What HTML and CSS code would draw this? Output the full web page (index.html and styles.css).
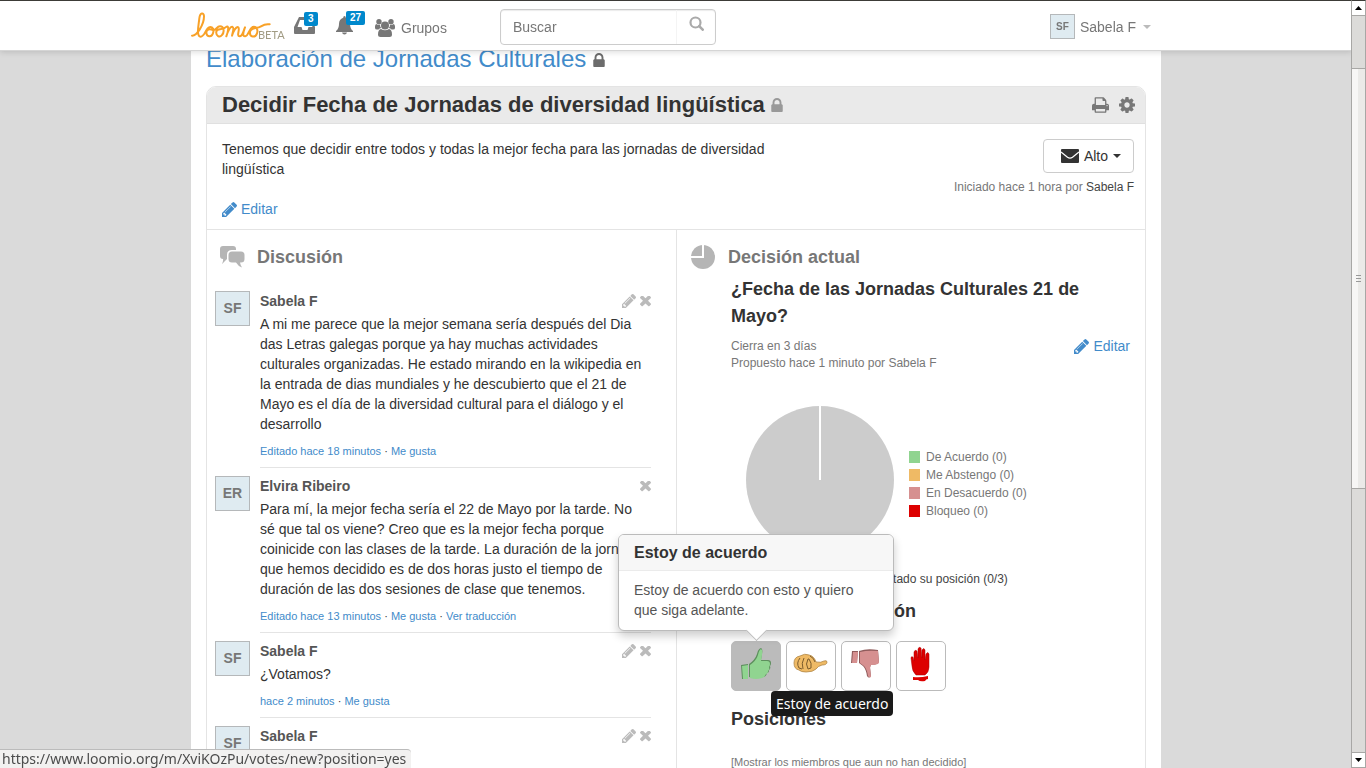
FILE: index.html
```html
<!DOCTYPE html>
<html lang="es">
<head>
  <meta charset="UTF-8">
  <meta name="viewport" content="width=device-width, initial-scale=1.0">
  <title>Decidir Fecha de Jornadas de diversidad lingüística | Loomio</title>
  <link rel="stylesheet" href="styles.css">
</head>
<body>
  <!-- shared icons -->
  <svg class="sprite" aria-hidden="true">
    <symbol id="i-lock" viewBox="320 128 1152 1408"><path d="M640 768h512v-192q0-106-75-181t-181-75-181 75-75 181v192zm832 96v576q0 40-28 68t-68 28h-960q-40 0-68-28t-28-68v-576q0-40 28-68t68-28h32v-192q0-184 132-316t316-132 316 132 132 316v192h32q40 0 68 28t28 68z"/></symbol>
    <symbol id="i-pencil" viewBox="128 149 1515 1515"><path d="M491 1536l91-91-235-235-91 91v107h128v128h107zm523-928q0-22-22-22-10 0-17 7l-542 542q-7 7-7 17 0 22 22 22 10 0 17-7l542-542q7-7 7-17zm-54-192l416 416-832 832h-416v-416zm683 96q0 53-37 90l-166 166-416-416 166-165q36-38 90-38 53 0 91 38l235 234q37 39 37 91z"/></symbol>
    <symbol id="i-times" viewBox="302 434 1188 1188"><path d="M1490 1322q0 40-28 68l-136 136q-28 28-68 28t-68-28l-294-294-294 294q-28 28-68 28t-68-28l-136-136q-28-28-28-68t28-68l294-294-294-294q-28-28-28-68t28-68l136-136q28-28 68-28t68 28l294 294 294-294q28-28 68-28t68 28l136 136q28 28 28 68t-28 68l-294 294 294 294q28 28 28 68z"/></symbol>
    <symbol id="i-cog" viewBox="128 128 1536 1536"><path d="M1152 896q0-106-75-181t-181-75-181 75-75 181 75 181 181 75 181-75 75-181zm512-109v222q0 12-8 23t-20 13l-185 28q-19 54-39 91 35 50 107 138 10 12 10 25t-9 23q-27 37-99 108t-94 71q-12 0-26-9l-138-108q-44 23-91 38-16 136-29 186-7 28-36 28h-222q-14 0-24.500-8.500t-11.500-21.500l-28-184q-49-16-90-37l-141 107q-10 9-25 9-14 0-25-11-126-114-165-168-7-10-7-23 0-12 8-23 15-21 51-66.500t54-70.500q-27-50-41-99l-183-27q-13-2-21-12.500t-8-23.500v-222q0-12 8-23t19-13l186-28q14-46 39-92-40-57-107-138-10-12-10-24 0-10 9-23 26-36 98.500-107.500t94.500-71.500q13 0 26 10l138 107q44-23 91-38 16-136 29-186 7-28 36-28h222q14 0 24.500 8.500t11.500 21.500l28 184q49 16 90 37l142-107q9-9 24-9 13 0 25 10 129 119 165 170 7 8 7 22 0 12-8 23-15 21-51 66.500t-54 70.500q26 50 41 98l183 28q13 2 21 12.500t8 23.500z"/></symbol>
    <symbol id="i-print" viewBox="64 128 1664 1536"><path d="M448 1536h896v-256h-896v256zm0-640h896v-384h-160q-40 0-68-28t-28-68v-160h-640v640zm1152 64q0-26-19-45t-45-19-45 19-19 45 19 45 45 19 45-19 19-45zm128 0v416q0 13-9.500 22.500t-22.500 9.500h-224v160q0 40-28 68t-68 28h-960q-40 0-68-28t-28-68v-160h-224q-13 0-22.500-9.500t-9.500-22.500v-416q0-79 56.500-135.500t135.500-56.500h64v-544q0-40 28-68t68-28h672q40 0 88 20t76 48l152 152q28 28 48 76t20 88v256h64q79 0 135.500 56.500t56.500 135.500z"/></symbol>
  </svg>

  <header class="navbar">
    <div class="navbar-inner">
      <a class="logo" href="#" aria-label="Loomio">
        <svg width="80" height="28" viewBox="33 31 240 84" fill="none" stroke="#f8a127" stroke-width="6" stroke-linecap="round" stroke-linejoin="round">
          <path d="M36 102 C50 103 72 70 72 44 C72 32 60 32 58 50 C56 70 48 105 62 105 C72 105 74 91 83 80 C91 71 103 78 100 91 C97 107 80 109 79 93 C79 82 89 81 99 85 C107 88 110 74 120 74 C132 74 134 91 126 100 C119 109 107 103 109 90 C111 76 127 89 140 75 C148 72 144 91 139 104 C143 89 151 73 158 76 C163 79 158 92 156 102 C160 89 168 73 175 77 C181 81 168 104 179 104 C188 104 190 88 195 77 C191 89 185 105 196 104 C205 103 207 81 218 76 C229 73 235 84 231 95 C226 109 208 108 210 91 C212 77 230 82 243 74 C251 69 258 66 269 68"/>
        </svg>
        <span class="beta">BETA</span>
      </a>
      <a class="nav-icon inbox" href="#" aria-label="Bandeja de entrada">
        <svg width="22" height="18" viewBox="0 0 22 18"><path fill="#777" fill-rule="evenodd" d="M5 0h12l4 10v6q0 1-1 1H1q-1 0-1-1v-6zM6 3L3.500 10h4l1 3h5l1-3h4L16 3z"/></svg>
        <span class="badge">3</span>
      </a>
      <a class="nav-icon bell" href="#" aria-label="Notificaciones">
        <svg width="17" height="19" viewBox="0 0 17 19"><path fill="#777" d="M8.500 0q1.300 0 1.300 1.700Q14 3 14 8q0 4.500 3 7v1H0v-1q3-2.500 3-7 0-5 4.200-6.300Q7.200 0 8.500 0zM6 16.500h5q-.5 2-2.500 2T6 16.500z"/></svg>
        <span class="badge">27</span>
      </a>
      <a class="groups" href="#">
        <svg width="20" height="18" viewBox="0 0 20 18" fill="#777"><circle cx="10" cy="6.500" r="4"/><circle cx="4" cy="2.700" r="2.700"/><circle cx="16" cy="2.700" r="2.700"/><path d="M0 9V7.500Q0 5 1.500 5 3 6.500 5 5.800 5 8 6.200 9 4.500 9.300 3.500 10.500H2Q0 10.500 0 9zM20 9V7.500Q20 5 18.500 5 17 6.500 15 5.800 15 8 13.800 9q1.700.3 2.700 1.500H18q2 0 2-1.500zM6 10q4 2.500 8 0 3 .5 3 5.500 0 2.500-2.500 2.500h-9Q3 18 3 15.500 3 10.500 6 10z"/></svg>
        Grupos
      </a>
      <form class="search" onsubmit="return false">
        <input type="text" placeholder="Buscar" aria-label="Buscar">
        <button type="submit" aria-label="Buscar">
          <svg width="15" height="15" viewBox="0 0 15 15" fill="none" stroke="#aaa"><circle cx="6.500" cy="6.500" r="5" stroke-width="2.200"/><path d="M10.200 10.200l3.500 3.500" stroke-width="2.600" stroke-linecap="round"/></svg>
        </button>
      </form>
      <a class="user" href="#"><span class="avatar avatar-small">SF</span>Sabela F<span class="caret"></span></a>
    </div>
  </header>

  <main class="page">
    <h1 class="group-name"><a href="#">Elaboración de Jornadas Culturales</a> <svg class="lock"><use href="#i-lock"/></svg></h1>

    <section class="panel">
      <header class="panel-title">
        <h2>Decidir Fecha de Jornadas de diversidad lingüística <svg class="lock"><use href="#i-lock"/></svg></h2>
        <button class="icon-btn" aria-label="Imprimir"><svg width="17" height="16"><use href="#i-print"/></svg></button>
        <button class="icon-btn" aria-label="Opciones"><svg width="16" height="16"><use href="#i-cog"/></svg></button>
      </header>

      <div class="context">
        <div class="description">
          <p>Tenemos que decidir entre todos y todas la mejor fecha para las jornadas de diversidad lingüística</p>
          <a class="edit" href="#"><svg width="15" height="15"><use href="#i-pencil"/></svg>Editar</a>
        </div>
        <div class="context-side">
          <button class="volume">
            <svg width="18" height="14" viewBox="0 0 18 14"><rect width="18" height="14" rx="1" fill="#333"/><path d="M0 3l6.500 5.200Q9 10 11.500 8.200L18 3" fill="none" stroke="#fff" stroke-width="1.300"/></svg>
            Alto<span class="caret"></span>
          </button>
          <div class="started">Iniciado hace 1 hora por <a href="#">Sabela F</a></div>
        </div>
      </div>

      <div class="columns">
        <section class="discussion">
          <h3 class="column-title">
            <svg width="25" height="22" viewBox="0 0 25 22" fill="#b5b5b5"><path d="M3 0h10q3 0 3 3v1h-4Q7 4 7 8.500V13L2 18q1.500-3 1-5-3 0-3-3V3q0-3 3-3z"/><path d="M12 5.500h9q3.500 0 3.500 3.500v4q0 3.500-3.500 3.500h-1q.5 3 2 5-4-1.500-6-5h-4q-3.500 0-3.500-3.500V9q0-3.500 3.500-3.500z"/></svg>
            Discusión
          </h3>

          <article class="comment">
            <span class="avatar">SF</span>
            <div class="comment-body">
              <div class="comment-head"><h4>Sabela F</h4>
                <button aria-label="Editar"><svg width="14" height="14"><use href="#i-pencil"/></svg></button>
                <button aria-label="Borrar"><svg width="11" height="11"><use href="#i-times"/></svg></button>
              </div>
              <p>A mi me parece que la mejor semana sería después del Dia das Letras galegas porque ya hay muchas actividades culturales organizadas. He estado mirando en la wikipedia en la entrada de dias mundiales y he descubierto que el 21 de Mayo es el día de la diversidad cultural para el diálogo y el desarrollo</p>
              <div class="actions"><a href="#">Editado hace 18 minutos</a> · <a href="#">Me gusta</a></div>
            </div>
          </article>

          <article class="comment">
            <span class="avatar">ER</span>
            <div class="comment-body">
              <div class="comment-head"><h4>Elvira Ribeiro</h4>
                <button aria-label="Borrar"><svg width="11" height="11"><use href="#i-times"/></svg></button>
              </div>
              <p>Para mí, la mejor fecha sería el 22 de Mayo por la tarde. No<br>
                sé que tal os viene? Creo que es la mejor fecha porque<br>
                coinicide con las clases de la tarde. La duración de la jornada<br>
                que hemos decidido es de dos horas justo el tiempo de<br>
                duración de las dos sesiones de clase que tenemos.</p>
              <div class="actions"><a href="#">Editado hace 13 minutos</a> · <a href="#">Me gusta</a> · <a href="#">Ver traducción</a></div>
            </div>
          </article>

          <article class="comment">
            <span class="avatar">SF</span>
            <div class="comment-body">
              <div class="comment-head"><h4>Sabela F</h4>
                <button aria-label="Editar"><svg width="14" height="14"><use href="#i-pencil"/></svg></button>
                <button aria-label="Borrar"><svg width="11" height="11"><use href="#i-times"/></svg></button>
              </div>
              <p>¿Votamos?</p>
              <div class="actions"><a href="#">hace 2 minutos</a> · <a href="#">Me gusta</a></div>
            </div>
          </article>

          <article class="comment">
            <span class="avatar">SF</span>
            <div class="comment-body">
              <div class="comment-head"><h4>Sabela F</h4>
                <button aria-label="Editar"><svg width="14" height="14"><use href="#i-pencil"/></svg></button>
                <button aria-label="Borrar"><svg width="11" height="11"><use href="#i-times"/></svg></button>
              </div>
            </div>
          </article>
        </section>

        <section class="decision">
          <h3 class="column-title">
            <svg width="24" height="24" viewBox="0 0 24 24"><circle cx="12" cy="12" r="12" fill="#b5b5b5"/><path d="M0 12h12V0" fill="none" stroke="#fff" stroke-width="2"/></svg>
            Decisión actual
          </h3>

          <div class="proposal">
            <h4 class="proposal-name">¿Fecha de las Jornadas Culturales 21 de Mayo?</h4>
            <div class="proposal-info">
              <div class="small">Cierra en 3 días<br>Propuesto hace 1 minuto por Sabela F</div>
              <a class="edit" href="#"><svg width="15" height="15"><use href="#i-pencil"/></svg>Editar</a>
            </div>

            <div class="results">
              <svg width="148" height="148" viewBox="0 0 148 148"><circle cx="74" cy="74" r="74" fill="#ccc"/><path d="M74 0v74" stroke="#fff" stroke-width="2"/></svg>
              <ul class="legend small">
                <li><span class="swatch yes"></span>De Acuerdo (0)</li>
                <li><span class="swatch abstain"></span>Me Abstengo (0)</li>
                <li><span class="swatch no"></span>En Desacuerdo (0)</li>
                <li><span class="swatch block"></span>Bloqueo (0)</li>
              </ul>
            </div>

            <p class="turnout">0 % de miembros han manifestado su posición (0/3)</p>
            <h4 class="vote-title">Establece tu posición</h4>

            <div class="votes">
              <div class="vote-wrap">
                <button class="vote active" aria-label="Estoy de acuerdo">
                  <svg width="32" height="34" viewBox="0 0 32 34"><path d="M1 18l7-1v15H2zM9 17q6-4 8-10 1-5 4-6 2 1 1 6l-1 6h7q3 0 3 3 0 2-1 3 1 3-1 4 0 3-2 3-1 4-4 4-6 2-14 0z" fill="#5d8f5d"/><path d="M2 19l6-1v14H3zM10 18q6-4 8-10 1-5 3-6 2 1 1 6l-1 6h6q3 0 3 3 0 2-1 3 1 3-1 4 0 3-2 3-1 3-4 4-6 2-12 0z" fill="#90d490"/></svg>
                </button>
                <div class="popover">
                  <h5>Estoy de acuerdo</h5>
                  <p>Estoy de acuerdo con esto y quiero que siga adelante.</p>
                </div>
                <div class="tooltip">Estoy de acuerdo</div>
              </div>
              <button class="vote" aria-label="Me abstengo">
                <svg width="36" height="22" viewBox="0 0 36 22"><path d="M1 10q0-6 6-7 5-3 9-1 5 1 7 7 5 1 8-1 3-1 3 1 0 3-5 3-4 1-6 4-3 3-10 3-5 0-7-2-5-1-5-7z" fill="#efba65" stroke="#b08545" stroke-width=".8"/><path d="M7 5q-4 5-1 10l3 1M11 5q-3 5-1 11M15 6q-3 5 0 10l3-1q1-5-2-9zM17 3q4 2 5 6" fill="none" stroke="#7c5c2c"/></svg>
              </button>
              <button class="vote" aria-label="No estoy de acuerdo">
                <svg width="32" height="34" viewBox="0 0 32 34"><path d="M2 4h6l-1 12H1zM9 4q8-3 19-1l1 12q-2 3-8 3l-1 2 1 9q-2 3-4 0-1-7-4-10l-4-3z" fill="#8f5b5b"/><path d="M3 5h5L7 16H2zM10 5q8-2 18-1l1 12q-2 2-8 2l-1 3 1 9q-2 1-3-1-1-7-4-10l-4-3z" fill="#d69090"/></svg>
              </button>
              <button class="vote" aria-label="Bloqueo">
                <svg width="24" height="36" viewBox="0 0 24 36"><path d="M2 12q0-2 2-1l1 4V6q1-3 3-1l1 7V3q1-3 3-1l1 10V4q2-3 3 0v10l1-6q2-3 3 0v13q0 5-4 8H7q-4-4-4-9z" fill="#d00" stroke="#a00" stroke-width=".5"/><path d="M4 31q7 1 15-1v3q-2 0-3 2-5 1-7-1H4z" fill="#d00"/></svg>
              </button>
            </div>

            <h4 class="positions-title">Posiciones</h4>
            <a class="show-members" href="#">[Mostrar los miembros que aun no han decidido]</a>
          </div>
        </section>
      </div>
    </section>
  </main>

  <!-- window scrollbar -->
  <div class="scrollbar">
    <span class="arrow"><svg width="7" height="4" viewBox="0 0 7 4"><path d="M0 4h7L3.500 0z"/></svg></span>
    <span class="trough-top"></span>
    <span class="thumb"></span>
    <span class="trough"></span>
    <span class="arrow"><svg width="7" height="4" viewBox="0 0 7 4"><path d="M0 0h7L3.500 4z"/></svg></span>
  </div>
  <div class="status">https://www.loomio.org/m/XviKOzPu/votes/new?position=yes</div>
</body>
</html>
```

FILE: styles.css
```css
* {
  box-sizing: border-box;
}

body {
  margin: 0;
  height: 100vh;
  overflow: hidden;
  padding-right: 14px;
  background: #dadada;
  color: #333;
  font-family: "Liberation Sans", Arial, sans-serif;
  font-size: 14px;
  line-height: 20px;
}

h1, h2, h3, h4, h5, p, ul {
  margin: 0;
  padding: 0;
}

a {
  color: #428bca;
  text-decoration: none;
}

button {
  padding: 0;
  border: 0;
  background: none;
  color: inherit;
  font: inherit;
  cursor: pointer;
}

svg {
  flex: none;
}

symbol {
  fill: currentColor;
}

.sprite {
  position: absolute;
  width: 0;
  height: 0;
}

/* navbar */
.navbar {
  position: fixed;
  top: 0;
  left: 0;
  right: 14px;
  z-index: 10;
  height: 51px;
  border-top: 1px solid #3c3b37;
  border-bottom: 1px solid #d5d5d5;
  background: #fff;
  box-shadow: 0 1px 6px rgba(0, 0, 0, 0.15);
}

.navbar-inner {
  display: flex;
  align-items: center;
  max-width: 970px;
  height: 49px;
  margin: 0 auto;
  color: #777;
}

.navbar a {
  color: #777;
}

.logo {
  display: flex;
  align-items: flex-end;
  width: 103px;
}

.navbar .beta {
  margin-left: -13px;
  color: #a19b83;
  font-family: Lato, sans-serif;
  font-size: 11px;
  line-height: 10px;
}

.nav-icon {
  position: relative;
  display: flex;
}

.inbox {
  width: 42px;
}

.bell {
  width: 39px;
}

.badge {
  position: absolute;
  top: -5px;
  left: 10px;
  padding: 0 4px;
  border-radius: 2px;
  background: #0088cc;
  color: #fff;
  font-size: 10px;
  font-weight: bold;
  line-height: 14px;
}

.groups {
  display: flex;
  align-items: center;
  gap: 6px;
  width: 125px;
  padding-top: 4px;
}

.search {
  display: flex;
  width: 216px;
  height: 36px;
  margin-top: 3px;
  border: 1px solid #ccc;
  border-radius: 4px;
  box-shadow: inset 0 1px 1px rgba(0, 0, 0, 0.08);
}

.search input {
  flex: 1;
  min-width: 0;
  padding: 0 12px;
  border: 0;
  border-right: 1px solid #f4f4f4;
  background: none;
  font: inherit;
}

.search input::placeholder {
  color: #777;
}

.search button {
  width: 38px;
  padding-bottom: 3px;
}

.user {
  display: flex;
  align-items: center;
  gap: 5px;
  margin-left: auto;
  padding: 2px 10px 0 0;
}

.caret {
  display: inline-block;
  margin-left: 4px;
  border: 4px solid transparent;
  border-top-color: currentColor;
  border-bottom: 0;
  vertical-align: middle;
}

.user .caret {
  margin-left: 2px;
  color: #bbb;
}

.avatar {
  flex: none;
  width: 35px;
  height: 35px;
  border: 1px solid #b5b8ba;
  background: #dfebf1;
  color: #777;
  font-weight: bold;
  line-height: 33px;
  text-align: center;
}

.avatar-small {
  width: 25px;
  height: 25px;
  font-size: 10px;
  line-height: 23px;
}

/* page */
.page {
  max-width: 970px;
  height: 100vh;
  margin: 0 auto;
  padding: 46px 15px 0;
  overflow: hidden;
  background: #fff;
}

.group-name {
  margin-bottom: 14px;
  color: #6c6c6c;
  font-size: 24px;
  font-weight: normal;
  line-height: 26px;
}

.lock {
  width: 12px;
  height: 14px;
}

.panel {
  border: 1px solid #e4e4e4;
  border-radius: 10px 10px 0 0;
}

.panel-title {
  display: flex;
  align-items: center;
  gap: 10px;
  height: 37px;
  padding: 0 10px 0 15px;
  border-bottom: 1px solid #e0e0e0;
  border-radius: 9px 9px 0 0;
  background: #eaeaea;
}

.panel-title h2 {
  flex: 1;
  font-size: 22px;
  line-height: 36px;
}

.panel-title .lock {
  color: #999;
}

.icon-btn {
  display: flex;
  color: #777;
}

.context {
  display: flex;
  justify-content: space-between;
  height: 106px;
  padding: 15px 11px 0 15px;
  border-bottom: 1px solid #e4e4e4;
}

.description {
  flex: 0 1 580px;
}

.edit {
  display: flex;
  align-items: center;
  gap: 4px;
}

.description .edit {
  margin-top: 20px;
}

.context-side {
  text-align: right;
}

.volume {
  display: inline-flex;
  align-items: center;
  gap: 5px;
  height: 34px;
  padding: 0 12px 0 17px;
  border: 1px solid #ccc;
  border-radius: 4px;
  background: #fff;
}

.volume .caret {
  margin-left: 0;
}

.small, .started {
  color: #777;
  font-size: 12px;
  line-height: 17px;
}

.started {
  margin-top: 6px;
}

.started a {
  color: #444;
}

.columns {
  display: flex;
}

.discussion, .decision {
  flex: 0 0 50%;
  min-width: 0;
}

.discussion {
  padding: 15px 25px 0 8px;
}

.decision {
  padding: 15px 14px 0;
  border-left: 1px solid #e4e4e4;
}

.column-title {
  display: flex;
  align-items: center;
  gap: 13px;
  height: 24px;
  color: #777;
  font-size: 18px;
}

.discussion .column-title {
  gap: 12px;
  margin-bottom: 22px;
  padding-left: 5px;
}

/* comments */
.comment {
  display: flex;
  gap: 10px;
  margin-bottom: 8px;
}

.comment-body {
  flex: 1;
  min-height: 77px;
  padding-bottom: 6px;
  border-bottom: 1px solid #e4e4e4;
}

.comment-body p {
  white-space: nowrap;
}

.comment:first-of-type p {
  white-space: normal;
}

.comment-head {
  display: flex;
  align-items: center;
  gap: 4px;
  margin-bottom: 3px;
}

.comment-head h4 {
  flex: 1;
  color: #555;
  font-size: 14px;
}

.comment-head button {
  display: flex;
  color: #bbb;
}

.actions {
  margin-top: 7px;
  font-size: 11px;
}

/* proposal */
.proposal {
  padding: 7px 0 0 40px;
}

.proposal-name {
  max-width: 370px;
  font-size: 18px;
  line-height: 27px;
}

.proposal-info {
  display: flex;
  justify-content: space-between;
  align-items: flex-start;
  margin-top: 8px;
  padding-right: 1px;
}

.proposal-info .edit {
  line-height: 17px;
}

.results {
  display: flex;
  align-items: center;
  gap: 15px;
  margin-top: 34px;
  padding-left: 15px;
}

.legend {
  list-style: none;
  margin-top: 8px;
}

.legend li {
  display: flex;
  align-items: center;
  gap: 6px;
  height: 18px;
}

.swatch {
  width: 11px;
  height: 12px;
}

.yes {
  background: #90d490;
}

.abstain {
  background: #efba65;
}

.no {
  background: #d69090;
}

.block {
  background: #dd0000;
}

.turnout {
  margin-top: 15px;
  color: #444;
  font-size: 12px;
}

.vote-title, .positions-title {
  font-size: 18px;
  line-height: 20px;
}

.vote-title {
  margin: 12px 0 20px;
}

.votes {
  display: flex;
  gap: 5px;
}

.vote-wrap {
  position: relative;
}

.vote {
  display: flex;
  align-items: center;
  justify-content: center;
  width: 50px;
  height: 50px;
  padding-bottom: 4px;
  border: 1px solid #bbb;
  border-radius: 5px;
  background: #fff;
}

.vote.active {
  background: #bbb;
}

.popover {
  position: absolute;
  bottom: 60px;
  left: 50%;
  z-index: 5;
  width: 276px;
  margin-left: -138px;
  border: 1px solid #bbb;
  border-radius: 6px;
  background: #fff;
  box-shadow: 0 5px 10px rgba(0, 0, 0, 0.2);
  color: #555;
}

.popover::after {
  content: "";
  position: absolute;
  bottom: -8px;
  left: 50%;
  width: 14px;
  height: 14px;
  margin-left: -7px;
  border: 1px solid #bbb;
  border-width: 0 1px 1px 0;
  background: #fff;
  transform: rotate(45deg);
}

.popover h5 {
  padding: 8px 15px;
  border-bottom: 1px solid #ebebeb;
  border-radius: 5px 5px 0 0;
  background: #f7f7f7;
  color: #333;
  font-size: 16px;
  line-height: 19px;
}

.popover p {
  padding: 9px 15px 10px;
}

.tooltip {
  position: absolute;
  top: 50px;
  left: 40px;
  z-index: 6;
  padding: 3px 5px 2px;
  border-radius: 4px;
  background: #1a1a1a;
  color: #fff;
  font-family: "Noto Sans", sans-serif;
  white-space: nowrap;
}

.positions-title {
  margin: 18px 0 22px;
}

.show-members {
  color: #777;
  font-size: 11px;
}

/* browser chrome */
.scrollbar {
  position: fixed;
  top: 0;
  right: 0;
  bottom: 0;
  z-index: 20;
  display: flex;
  flex-direction: column;
  width: 15px;
  border: 1px solid #a8a7a5;
  border-top-color: #3c3b37;
  background: #dcdbd9;
}

.arrow {
  display: flex;
  align-items: center;
  justify-content: center;
  height: 14px;
  background: #fff;
}

.trough-top {
  height: 53px;
  border-top: 1px solid #a8a7a5;
}

.thumb {
  height: 421px;
  border: 1px solid #a8a7a5;
  border-width: 1px 0;
  background: repeating-linear-gradient(#999 0 1px, transparent 1px 3px) center / 5px 7px no-repeat, linear-gradient(90deg, #f7f6f5 50%, #ebeae8 50%);
}

.trough {
  flex: 1;
  border-bottom: 1px solid #a8a7a5;
}

.status {
  position: fixed;
  bottom: 0;
  left: 0;
  z-index: 20;
  padding: 0 5px 0 2px;
  border-top: 1px solid #bbb;
  border-radius: 0 4px 0 0;
  background: #f2f1f0;
  color: #4c4c4c;
  font-family: "Noto Sans", sans-serif;
  line-height: 18px;
}
```
